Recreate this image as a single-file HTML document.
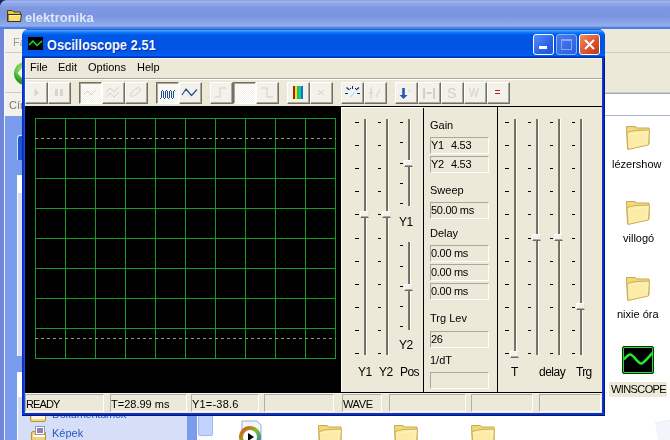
<!DOCTYPE html><html><head><meta charset="utf-8"><style>
*{box-sizing:border-box}
html,body{margin:0;padding:0}
body{width:670px;height:440px;overflow:hidden;position:relative;background:#fff;font-family:"Liberation Sans",sans-serif;font-size:11px;color:#000}
.a{position:absolute}
.t{position:absolute;white-space:nowrap;line-height:1;will-change:transform}
.btn{position:absolute;top:82px;height:22px;background:#f3f2ea;border-top:1px solid #fff;border-left:1px solid #fff;border-right:1px solid #716f64;border-bottom:1px solid #716f64;box-shadow:inset -1px -1px 0 #aca899}
.btn.dn{background:repeating-conic-gradient(#fff 0 25%,#f2f1e8 0 50%) 0 0/2px 2px;border-top:1px solid #716f64;border-left:1px solid #716f64;border-right:1px solid #fff;border-bottom:1px solid #fff;box-shadow:inset 1px 1px 0 #aca899}
.tick{position:absolute;width:4px;height:1px;background:#000}
.trk{position:absolute;width:3px;border-left:1px solid #7a776b;border-right:1px solid #fff;background:#6f6c60}
.thumb{position:absolute;width:9px;height:7px;background:#f3f2ea;border-top:1px solid #fff;border-left:1px solid #fff;border-right:1px solid #e4e1d4;border-bottom:1px solid #6f6c60;box-shadow:inset 0 -1px 0 #aca899}
.box{position:absolute;background:#ece9d8;border-top:1px solid #aca899;border-left:1px solid #aca899;border-right:1px solid #fff;border-bottom:1px solid #fff}
.sp{position:absolute;top:394px;height:18px;border-top:1px solid #b4b0a0;border-left:1px solid #b4b0a0;border-right:1px solid #fff;border-bottom:1px solid #fff}
</style></head><body>
<div class="a" style="left:0;top:0;width:670px;height:29px;background:linear-gradient(#7b90d9 0,#a2b7f0 1px,#93aaea 3px,#7e97e2 8px,#7b95e0 16px,#86a3e8 22px,#92b0ee 26px,#3f73d8 28px,#5a86dd 29px)"></div>
<svg class="a" style="left:0;top:0" width="8" height="8"><path d="M0 0H6Q1 1 0 6Z" fill="#1a2860"/></svg>
<svg class="a" style="left:6px;top:9px" width="18" height="14" viewBox="0 0 18 14"><path d="M1.5 1.5h5l1.5 1.5h6.5v9.5H1.5z" fill="#e8c840" stroke="#4a4020" stroke-width="1"/><path d="M2 5.5h13.5l-1 7H2z" fill="#f8e070" stroke="#3a3418" stroke-width="1"/><path d="M3 6.5h11" stroke="#fff2b0"/></svg>
<div class="t" style="left:25px;top:11px;font-size:13px;font-weight:bold;color:#dfe6fa">elektronika</div>
<div class="a" style="left:0;top:29px;width:4px;height:411px;background:#7084d8"></div>
<div class="a" style="left:4px;top:29px;width:1px;height:87px;background:#f8f8f4"></div>
<div class="a" style="left:5px;top:29px;width:665px;height:87px;background:#ece9d8"></div>
<div class="a" style="left:5px;top:29px;width:17px;height:87px;background:#f2f1ea"></div>
<div class="a" style="left:5px;top:52px;width:665px;height:1px;background:#d0cdc0"></div>
<div class="t" style="left:13px;top:37px;color:#999">Fá</div>
<div class="a" style="left:14px;top:62px;width:23px;height:23px;border-radius:12px;background:radial-gradient(circle at 40% 30%,#a0ea80 0,#5cc840 8px,#2a9a22 12px)"></div>
<svg class="a" style="left:14px;top:62px" width="23" height="23"><path d="M3.5 11L10 4L10 18Z" fill="#f6fbf4"/></svg>
<div class="a" style="left:5px;top:92px;width:665px;height:1px;background:#d0cdc0"></div>
<div class="t" style="left:9px;top:100px;color:#777">Cím</div>
<div class="a" style="left:605px;top:93px;width:65px;height:23px;background:#fff;border-top:1px solid #a0a8b8;border-bottom:1px solid #a5b4cf"></div>
<div class="a" style="left:4px;top:116px;width:1px;height:324px;background:#e6eeff"></div>
<div class="a" style="left:5px;top:116px;width:192px;height:324px;background:#7b9cec"></div>
<div class="a" style="left:17px;top:135px;width:170px;height:25px;background:#1f55d0;border-radius:3px 3px 0 0;border-top:1px solid #cfe0ff;border-left:1px solid #cfe0ff"></div>
<div class="a" style="left:17px;top:175px;width:170px;height:181px;background:#d6dff7;border-left:1px solid #fff"></div>
<div class="a" style="left:17px;top:175px;width:170px;height:18px;background:#fff;border-radius:4px 4px 0 0"></div>
<div class="a" style="left:17px;top:372px;width:170px;height:70px;background:#d6dff7;border-left:1px solid #fff"></div>
<div class="a" style="left:17px;top:372px;width:170px;height:25px;background:#fff;border-radius:4px 4px 0 0"></div>
<div class="a" style="left:197px;top:116px;width:16px;height:324px;background:#fbfbf8"></div>
<div class="a" style="left:198px;top:410px;width:15px;height:26px;background:#c3d3fd;border:1px solid #a3b8f0;border-radius:2px"></div>
<div class="a" style="left:213px;top:116px;width:457px;height:324px;background:#fff"></div>
<div class="t" style="left:52px;top:409px;color:#2658c0;letter-spacing:-0.25px">Dokumentumok</div>
<div class="t" style="left:52px;top:428px;color:#2658c0">Képek</div>
<div class="a" style="left:30px;top:408px;width:16px;height:14px;background:#f0d890;border:1px solid #b8962a;border-radius:2px"></div>
<div class="a" style="left:32px;top:416px;width:13px;height:3px;background:#fff8e0"></div>
<div class="a" style="left:31px;top:431px;width:15px;height:10px;background:#f0d070;border:1px solid #b8962a;border-radius:2px"></div>
<div class="a" style="left:35px;top:426px;width:10px;height:9px;background:#fff;border:1px solid #8a9ab8"></div>
<div class="a" style="left:37px;top:428px;width:6px;height:5px;background:linear-gradient(#6a8ad8,#d06a8a)"></div>
<div class="a" style="left:33px;top:435px;width:12px;height:2px;background:#fff"></div>
<svg class="a" style="left:624px;top:125px" width="28" height="26" viewBox="0 0 28 26"><path d="M2.5 1.5 L11 1.5 L13 3 L25 3 L25 19 L3.5 24 Z" fill="#f2d978" stroke="#c9aa50" stroke-width="1"/><path d="M3 7.5 Q8 6 12 5.5 L25.5 5 L24.5 20 L4 24.5 Z" fill="#fceca8" stroke="#ccae58" stroke-width="1"/><path d="M5 9 L23 7 L22.5 18" fill="none" stroke="#fdf3c0" stroke-width="1"/></svg>
<svg class="a" style="left:624px;top:200px" width="28" height="26" viewBox="0 0 28 26"><path d="M2.5 1.5 L11 1.5 L13 3 L25 3 L25 19 L3.5 24 Z" fill="#f2d978" stroke="#c9aa50" stroke-width="1"/><path d="M3 7.5 Q8 6 12 5.5 L25.5 5 L24.5 20 L4 24.5 Z" fill="#fceca8" stroke="#ccae58" stroke-width="1"/><path d="M5 9 L23 7 L22.5 18" fill="none" stroke="#fdf3c0" stroke-width="1"/></svg>
<svg class="a" style="left:624px;top:276px" width="28" height="26" viewBox="0 0 28 26"><path d="M2.5 1.5 L11 1.5 L13 3 L25 3 L25 19 L3.5 24 Z" fill="#f2d978" stroke="#c9aa50" stroke-width="1"/><path d="M3 7.5 Q8 6 12 5.5 L25.5 5 L24.5 20 L4 24.5 Z" fill="#fceca8" stroke="#ccae58" stroke-width="1"/><path d="M5 9 L23 7 L22.5 18" fill="none" stroke="#fdf3c0" stroke-width="1"/></svg>
<div class="t" style="left:612px;top:159px">lézershow</div>
<div class="t" style="left:623px;top:233px">villogó</div>
<div class="t" style="left:617px;top:309px">nixie óra</div>
<div class="a" style="left:622px;top:346px;width:32px;height:28px;background:#000;border:1px solid #0a300a;box-shadow:inset 0 0 0 1px #2ad83a, inset 0 0 0 2px #000;border-radius:2px"></div>
<svg class="a" style="left:622px;top:346px" width="32" height="28"><path d="M2 13.5C4 11 6.5 8.5 8.5 8.5C11 8.5 16 17.5 19 17.5C22 17.5 27 10 30.5 7" fill="none" stroke="#22e633" stroke-width="2.6"/></svg>
<div class="a" style="left:609px;top:382px;width:58px;height:15px;background:#ece9d8"></div>
<div class="t" style="left:611px;top:384px;letter-spacing:-0.6px">WINSCOPE</div>
<svg class="a" style="left:650px;top:418px" width="20" height="22"><path d="M5 5L20 2V22H8Z" fill="#f3f5fb"/><path d="M5 5L20 2" stroke="#eaedf7"/></svg>
<svg class="a" style="left:316px;top:424px" width="28" height="26" viewBox="0 0 28 26"><path d="M2.5 1.5 L11 1.5 L13 3 L25 3 L25 19 L3.5 24 Z" fill="#f2d978" stroke="#c9aa50" stroke-width="1"/><path d="M3 7.5 Q8 6 12 5.5 L25.5 5 L24.5 20 L4 24.5 Z" fill="#fceca8" stroke="#ccae58" stroke-width="1"/><path d="M5 9 L23 7 L22.5 18" fill="none" stroke="#fdf3c0" stroke-width="1"/></svg>
<svg class="a" style="left:392px;top:424px" width="28" height="26" viewBox="0 0 28 26"><path d="M2.5 1.5 L11 1.5 L13 3 L25 3 L25 19 L3.5 24 Z" fill="#f2d978" stroke="#c9aa50" stroke-width="1"/><path d="M3 7.5 Q8 6 12 5.5 L25.5 5 L24.5 20 L4 24.5 Z" fill="#fceca8" stroke="#ccae58" stroke-width="1"/><path d="M5 9 L23 7 L22.5 18" fill="none" stroke="#fdf3c0" stroke-width="1"/></svg>
<svg class="a" style="left:469px;top:424px" width="28" height="26" viewBox="0 0 28 26"><path d="M2.5 1.5 L11 1.5 L13 3 L25 3 L25 19 L3.5 24 Z" fill="#f2d978" stroke="#c9aa50" stroke-width="1"/><path d="M3 7.5 Q8 6 12 5.5 L25.5 5 L24.5 20 L4 24.5 Z" fill="#fceca8" stroke="#ccae58" stroke-width="1"/><path d="M5 9 L23 7 L22.5 18" fill="none" stroke="#fdf3c0" stroke-width="1"/></svg>
<svg class="a" style="left:236px;top:420px" width="32" height="20"><path d="M6 1h15l4 4v16H6z" fill="#f4f6fc" stroke="#9aabd0"/><circle cx="14" cy="17" r="9" fill="none" stroke="url(#wm)" stroke-width="4"/><defs><linearGradient id="wm" x1="0" y1="0" x2="1" y2="1"><stop offset="0" stop-color="#e8501a"/><stop offset="0.5" stop-color="#7cc02a"/><stop offset="1" stop-color="#2a6fd8"/></linearGradient></defs><circle cx="14" cy="17" r="6.5" fill="#fff"/><path d="M12 13l6 4-6 4z" fill="#000"/></svg>
<div class="a" style="left:22px;top:29px;width:583px;height:387px;background:#0831d9;border-radius:7px 7px 0 0"></div>
<div class="a" style="left:22px;top:29px;width:583px;height:29px;border-radius:7px 7px 0 0;background:linear-gradient(#2a62d8 0px 1px,#4a9cff 1px 2px,#2a8aff 2px 3px,#1479fc 3px 4px,#066cf6 4px 5px,#0262ee 5px 6px,#0057e5 6px 7px,#0057e5 7px 8px,#0057e5 8px 9px,#0057e5 9px 10px,#0057e5 10px 11px,#0054e3 11px 12px,#0054e3 12px 13px,#0054e3 13px 14px,#0054e3 14px 15px,#0054e3 15px 16px,#0054e3 16px 17px,#0054e3 17px 18px,#0054e3 18px 19px,#0054e3 19px 20px,#0054e3 20px 21px,#0058ea 21px 22px,#0058ea 22px 23px,#0058ea 23px 24px,#0058ea 24px 25px,#005ef2 25px 26px,#005ef2 26px 27px,#0040c8 27px 28px,#0032b4 28px 29px)"></div>
<div class="a" style="left:22px;top:58px;width:3px;height:358px;background:linear-gradient(90deg,#0a2eb8 0 1px,#0a38d8 1px 2px,#1a50e8 2px 3px)"></div>
<div class="a" style="left:602px;top:58px;width:3px;height:358px;background:linear-gradient(90deg,#1238d0 0 1px,#0a2cb8 1px 2px,#00188c 2px 3px)"></div>
<div class="a" style="left:22px;top:413px;width:583px;height:3px;background:linear-gradient(#1238d0 0 1px,#0a2cb8 1px 2px,#00168a 2px 3px)"></div>
<div class="a" style="left:28px;top:37px;width:15px;height:13px;background:#000"></div>
<svg class="a" style="left:28px;top:37px" width="15" height="13"><polyline points="1,8 5,4 9,8.5 14,4" fill="none" stroke="#20e020" stroke-width="1.5"/></svg>
<div class="t" style="left:47px;top:38px;font-size:14px;font-weight:bold;color:#fff;text-shadow:1px 1px 0 #0a2ea0;transform:scaleX(0.92);transform-origin:0 0">Oscilloscope 2.51</div>
<div class="a" style="left:533px;top:34px;width:21px;height:21px;border:1px solid #fff;border-radius:3px;background:linear-gradient(135deg,#5a8cff,#2b62e8 60%,#1f50d8)"></div>
<div class="a" style="left:539px;top:46px;width:8px;height:3px;background:#fff"></div>
<div class="a" style="left:556px;top:34px;width:21px;height:21px;border:1px solid #8fb0f5;border-radius:3px;background:linear-gradient(135deg,#4a7cf0,#2a5ee0)"></div>
<div class="a" style="left:561px;top:39px;width:11px;height:11px;border:1px solid #8aa6ec;border-top-width:2px"></div>
<div class="a" style="left:579px;top:34px;width:21px;height:21px;border:1px solid #fff;border-radius:3px;background:linear-gradient(135deg,#f08a60,#d9502a 60%,#c03a18)"></div>
<svg class="a" style="left:579px;top:34px" width="21" height="21"><path d="M6 6L15 15M15 6L6 15" stroke="#fff" stroke-width="2"/></svg>
<div class="a" style="left:25px;top:58px;width:577px;height:355px;background:#ece9d8;border-top:1px solid #f8f8f4"></div>
<div class="a" style="left:25px;top:58px;width:1px;height:355px;background:#fbfbf7"></div>
<div class="t" style="left:30px;top:62px">File</div>
<div class="t" style="left:58px;top:62px">Edit</div>
<div class="t" style="left:88px;top:62px">Options</div>
<div class="t" style="left:137px;top:62px">Help</div>
<div class="a" style="left:25px;top:78px;width:577px;height:1px;background:#aca899"></div>
<div class="a" style="left:25px;top:79px;width:577px;height:1px;background:#fff"></div>
<div class="btn" style="left:25px;width:23px"></div>
<div class="btn" style="left:48px;width:23px"></div>
<div class="btn dn" style="left:79px;width:23px"></div>
<div class="btn" style="left:102px;width:23px"></div>
<div class="btn" style="left:125px;width:23px"></div>
<div class="btn dn" style="left:156px;width:23px"></div>
<div class="btn" style="left:179px;width:23px"></div>
<div class="btn" style="left:210px;width:23px"></div>
<div class="btn dn" style="left:233px;width:23px"></div>
<div class="btn" style="left:256px;width:23px"></div>
<div class="btn" style="left:287px;width:23px"></div>
<div class="btn" style="left:310px;width:23px"></div>
<div class="btn" style="left:341px;width:23px"></div>
<div class="btn" style="left:364px;width:23px"></div>
<div class="btn" style="left:395px;width:23px"></div>
<div class="btn" style="left:418px;width:23px"></div>
<div class="btn" style="left:441px;width:23px"></div>
<div class="btn" style="left:464px;width:23px"></div>
<div class="btn" style="left:487px;width:23px"></div>
<svg class="a" style="left:26px;top:81px" width="22" height="23"><path d="M8.5 7.5L13 11.5L8.5 15.5Z" fill="#d8d5c8"/></svg>
<svg class="a" style="left:48px;top:81px" width="22" height="23"><path d="M7 8h3v7H7zM12 8h3v7h-3z" fill="#d8d5c8"/></svg>
<svg class="a" style="left:79px;top:81px" width="22" height="23"><polyline points="5,13 9,10 12,14 17,9" fill="none" stroke="#d3d0c3" stroke-width="1"/></svg>
<svg class="a" style="left:102px;top:81px" width="22" height="23"><polyline points="4,11 8,7 12,11 17,6" fill="none" stroke="#d3d0c3"/><polyline points="4,16 8,12 12,16 17,11" fill="none" stroke="#d3d0c3"/></svg>
<svg class="a" style="left:125px;top:81px" width="22" height="23"><path d="M6 15C4 13 12 5 15 7C17 9 9 17 6 15Z" fill="none" stroke="#d3d0c3"/></svg>
<svg class="a" style="left:156px;top:81px" width="22" height="23"><g fill="#1f4a98"><rect x="5" y="10" width="1" height="7"/><rect x="7" y="10" width="1" height="7"/><rect x="9" y="10" width="1" height="7"/><rect x="11" y="10" width="1" height="7"/><rect x="13" y="10" width="1" height="7"/><rect x="15" y="10" width="1" height="7"/><rect x="17" y="10" width="1" height="7"/><rect x="6" y="9" width="1" height="1"/><rect x="10" y="9" width="1" height="1"/><rect x="14" y="9" width="1" height="1"/><rect x="18" y="9" width="1" height="1"/><rect x="4" y="17" width="1" height="1"/><rect x="8" y="17" width="1" height="1"/><rect x="12" y="17" width="1" height="1"/><rect x="16" y="17" width="1" height="1"/></g></svg>
<svg class="a" style="left:179px;top:81px" width="22" height="23"><polyline points="3,14 7,8 12.5,14.5 18,8.5" fill="none" stroke="#2a4ea0" stroke-width="1.2" stroke-linejoin="round"/></svg>
<svg class="a" style="left:210px;top:81px" width="22" height="23"><path d="M5 16h5V7h6" fill="none" stroke="#d3d0c3"/></svg>
<svg class="a" style="left:256px;top:81px" width="22" height="23"><path d="M5 7h6v9h6" fill="none" stroke="#d3d0c3"/></svg>
<svg class="a" style="left:287px;top:81px" width="22" height="23"><rect x="6" y="5" width="2" height="13" fill="#b02000"/><rect x="8" y="5" width="2" height="13" fill="#f0e030"/><rect x="10" y="5" width="2" height="13" fill="#20c840"/><rect x="12" y="5" width="2" height="13" fill="#10c8a8"/><rect x="14" y="5" width="2" height="13" fill="#1870c0"/></svg>
<svg class="a" style="left:310px;top:81px" width="22" height="23"><path d="M8 9l6 5M14 9l-6 5" stroke="#d3d0c3"/></svg>
<svg class="a" style="left:342px;top:81px" width="22" height="23"><ellipse cx="11" cy="11" rx="6" ry="4" fill="#ebf5fb"/><path d="M3 12.5h3M15 12.5h3M4.5 6.5l3 2.5M17 6.5l-3 2.5M10.5 5v3M8 7.5h1M13 7.5h1" stroke="#1c2c55" stroke-width="1.1"/><path d="M8.5 16l4-4.5" stroke="#b9c8d8"/></svg>
<svg class="a" style="left:364px;top:81px" width="22" height="23"><path d="M7 6v12M5 12h4M12 16l4-8" stroke="#d3d0c3"/></svg>
<svg class="a" style="left:395px;top:81px" width="22" height="23"><path d="M7.2 7h2.6v7h2.7l-4 4-4-4h2.7z" fill="#2a54b8"/><path d="M13 10h3" stroke="#d8d5c8"/></svg>
<svg class="a" style="left:418px;top:81px" width="22" height="23"><path d="M6 7v11M16 7v11M8.5 12h5" stroke="#d3d0c3" stroke-width="2"/></svg>
<div class="t" style="left:447px;top:86px;font-size:14px;color:#d3d0c3">S</div>
<div class="t" style="left:469px;top:86px;font-size:13px;color:#d3d0c3;transform:scaleX(0.8);transform-origin:0 0">W</div>
<svg class="a" style="left:487px;top:81px" width="22" height="23"><rect x="8" y="9" width="5" height="1" fill="#c01828"/><rect x="8" y="12" width="5" height="1" fill="#c01828"/></svg>
<div class="a" style="left:25px;top:106px;width:316px;height:287px;background:#000"></div>
<svg class="a" style="left:0;top:0" width="670" height="440"><rect x="35" y="118" width="1" height="241" fill="#189a2a"/><rect x="65" y="118" width="1" height="241" fill="#189a2a"/><rect x="95" y="118" width="1" height="241" fill="#189a2a"/><rect x="125" y="118" width="1" height="241" fill="#189a2a"/><rect x="155" y="118" width="1" height="241" fill="#189a2a"/><rect x="185" y="118" width="1" height="241" fill="#189a2a"/><rect x="215" y="118" width="1" height="241" fill="#189a2a"/><rect x="245" y="118" width="1" height="241" fill="#189a2a"/><rect x="275" y="118" width="1" height="241" fill="#189a2a"/><rect x="305" y="118" width="1" height="241" fill="#189a2a"/><rect x="335" y="118" width="1" height="241" fill="#189a2a"/><rect x="35" y="118" width="301" height="1" fill="#189a2a"/><rect x="35" y="148" width="301" height="1" fill="#189a2a"/><rect x="35" y="178" width="301" height="1" fill="#189a2a"/><rect x="35" y="208" width="301" height="1" fill="#189a2a"/><rect x="35" y="238" width="301" height="1" fill="#189a2a"/><rect x="35" y="268" width="301" height="1" fill="#189a2a"/><rect x="35" y="298" width="301" height="1" fill="#189a2a"/><rect x="35" y="328" width="301" height="1" fill="#189a2a"/><rect x="35" y="358" width="301" height="1" fill="#189a2a"/><line x1="35" y1="138.5" x2="336" y2="138.5" stroke="#84a47a" stroke-dasharray="3 3"/><line x1="35" y1="338.5" x2="336" y2="338.5" stroke="#84a47a" stroke-dasharray="3 3"/></svg>
<div class="a" style="left:341px;top:106px;width:261px;height:1px;background:#000"></div>
<div class="a" style="left:341px;top:392px;width:261px;height:1px;background:#000"></div>
<div class="a" style="left:423px;top:106px;width:1px;height:287px;background:#000"></div>
<div class="a" style="left:497px;top:106px;width:1px;height:287px;background:#000"></div>
<div class="a" style="left:341px;top:107px;width:83px;height:1px;background:#fff"></div>
<div class="a" style="left:341px;top:107px;width:1px;height:285px;background:#fff"></div>
<div class="trk" style="left:364px;top:119px;height:236px"></div>
<div class="tick" style="left:355px;top:122px;width:4px"></div>
<div class="tick" style="left:355px;top:145px;width:4px"></div>
<div class="tick" style="left:355px;top:168px;width:4px"></div>
<div class="tick" style="left:355px;top:191px;width:4px"></div>
<div class="tick" style="left:355px;top:214px;width:4px"></div>
<div class="tick" style="left:355px;top:238px;width:4px"></div>
<div class="tick" style="left:355px;top:261px;width:4px"></div>
<div class="tick" style="left:355px;top:284px;width:4px"></div>
<div class="tick" style="left:355px;top:307px;width:4px"></div>
<div class="tick" style="left:355px;top:330px;width:4px"></div>
<div class="tick" style="left:355px;top:353px;width:4px"></div>
<div class="thumb" style="left:360px;top:211px"></div>
<div class="trk" style="left:386px;top:119px;height:236px"></div>
<div class="tick" style="left:378px;top:122px;width:3px"></div>
<div class="tick" style="left:378px;top:145px;width:3px"></div>
<div class="tick" style="left:378px;top:168px;width:3px"></div>
<div class="tick" style="left:378px;top:191px;width:3px"></div>
<div class="tick" style="left:378px;top:214px;width:3px"></div>
<div class="tick" style="left:378px;top:238px;width:3px"></div>
<div class="tick" style="left:378px;top:261px;width:3px"></div>
<div class="tick" style="left:378px;top:284px;width:3px"></div>
<div class="tick" style="left:378px;top:307px;width:3px"></div>
<div class="tick" style="left:378px;top:330px;width:3px"></div>
<div class="tick" style="left:378px;top:353px;width:3px"></div>
<div class="thumb" style="left:382px;top:211px"></div>
<div class="trk" style="left:408px;top:119px;height:87px"></div>
<div class="tick" style="left:400px;top:122px;width:3px"></div>
<div class="tick" style="left:400px;top:142px;width:3px"></div>
<div class="tick" style="left:400px;top:163px;width:3px"></div>
<div class="tick" style="left:400px;top:183px;width:3px"></div>
<div class="tick" style="left:400px;top:203px;width:3px"></div>
<div class="thumb" style="left:404px;top:160px"></div>
<div class="trk" style="left:408px;top:242px;height:88px"></div>
<div class="tick" style="left:400px;top:245px;width:3px"></div>
<div class="tick" style="left:400px;top:266px;width:3px"></div>
<div class="tick" style="left:400px;top:286px;width:3px"></div>
<div class="tick" style="left:400px;top:306px;width:3px"></div>
<div class="tick" style="left:400px;top:326px;width:3px"></div>
<div class="thumb" style="left:404px;top:284px"></div>
<div class="t" style="left:399px;top:216px;font-size:12px;letter-spacing:-0.5px">Y1</div>
<div class="t" style="left:399px;top:339px;font-size:12px;letter-spacing:-0.5px">Y2</div>
<div class="t" style="left:358px;top:366px;font-size:12px;letter-spacing:-0.5px">Y1</div>
<div class="t" style="left:379px;top:366px;font-size:12px;letter-spacing:-0.5px">Y2</div>
<div class="t" style="left:400px;top:366px;font-size:12px;letter-spacing:-0.6px">Pos</div>
<div class="trk" style="left:514px;top:119px;height:236px"></div>
<div class="tick" style="left:505px;top:122px;width:4px"></div>
<div class="tick" style="left:505px;top:145px;width:4px"></div>
<div class="tick" style="left:505px;top:168px;width:4px"></div>
<div class="tick" style="left:505px;top:191px;width:4px"></div>
<div class="tick" style="left:505px;top:214px;width:4px"></div>
<div class="tick" style="left:505px;top:238px;width:4px"></div>
<div class="tick" style="left:505px;top:261px;width:4px"></div>
<div class="tick" style="left:505px;top:284px;width:4px"></div>
<div class="tick" style="left:505px;top:307px;width:4px"></div>
<div class="tick" style="left:505px;top:330px;width:4px"></div>
<div class="tick" style="left:505px;top:353px;width:4px"></div>
<div class="thumb" style="left:510px;top:351px"></div>
<div class="trk" style="left:536px;top:119px;height:236px"></div>
<div class="tick" style="left:528px;top:122px;width:3px"></div>
<div class="tick" style="left:528px;top:145px;width:3px"></div>
<div class="tick" style="left:528px;top:168px;width:3px"></div>
<div class="tick" style="left:528px;top:191px;width:3px"></div>
<div class="tick" style="left:528px;top:214px;width:3px"></div>
<div class="tick" style="left:528px;top:238px;width:3px"></div>
<div class="tick" style="left:528px;top:261px;width:3px"></div>
<div class="tick" style="left:528px;top:284px;width:3px"></div>
<div class="tick" style="left:528px;top:307px;width:3px"></div>
<div class="tick" style="left:528px;top:330px;width:3px"></div>
<div class="tick" style="left:528px;top:353px;width:3px"></div>
<div class="thumb" style="left:532px;top:234px"></div>
<div class="trk" style="left:558px;top:119px;height:236px"></div>
<div class="tick" style="left:550px;top:122px;width:3px"></div>
<div class="tick" style="left:550px;top:145px;width:3px"></div>
<div class="tick" style="left:550px;top:168px;width:3px"></div>
<div class="tick" style="left:550px;top:191px;width:3px"></div>
<div class="tick" style="left:550px;top:214px;width:3px"></div>
<div class="tick" style="left:550px;top:238px;width:3px"></div>
<div class="tick" style="left:550px;top:261px;width:3px"></div>
<div class="tick" style="left:550px;top:284px;width:3px"></div>
<div class="tick" style="left:550px;top:307px;width:3px"></div>
<div class="tick" style="left:550px;top:330px;width:3px"></div>
<div class="tick" style="left:550px;top:353px;width:3px"></div>
<div class="thumb" style="left:554px;top:234px"></div>
<div class="trk" style="left:580px;top:119px;height:236px"></div>
<div class="tick" style="left:572px;top:122px;width:3px"></div>
<div class="tick" style="left:572px;top:145px;width:3px"></div>
<div class="tick" style="left:572px;top:168px;width:3px"></div>
<div class="tick" style="left:572px;top:191px;width:3px"></div>
<div class="tick" style="left:572px;top:214px;width:3px"></div>
<div class="tick" style="left:572px;top:238px;width:3px"></div>
<div class="tick" style="left:572px;top:261px;width:3px"></div>
<div class="tick" style="left:572px;top:284px;width:3px"></div>
<div class="tick" style="left:572px;top:307px;width:3px"></div>
<div class="tick" style="left:572px;top:330px;width:3px"></div>
<div class="tick" style="left:572px;top:353px;width:3px"></div>
<div class="thumb" style="left:576px;top:303px"></div>
<div class="t" style="left:511px;top:366px;font-size:12px">T</div>
<div class="t" style="left:539px;top:366px;font-size:12px;letter-spacing:-0.5px">delay</div>
<div class="t" style="left:576px;top:366px;font-size:12px;letter-spacing:-0.7px">Trg</div>
<div class="t" style="left:430px;top:120px;font-size:11px">Gain</div>
<div class="box" style="left:430px;top:137px;width:59px;height:17px"></div>
<div class="t" style="left:431px;top:140px;font-size:11px;letter-spacing:-0.3px">Y1</div>
<div class="box" style="left:430px;top:156px;width:59px;height:17px"></div>
<div class="t" style="left:431px;top:159px;font-size:11px;letter-spacing:-0.3px">Y2</div>
<div class="t" style="left:451px;top:140px;font-size:11px;letter-spacing:-0.3px">4.53</div>
<div class="t" style="left:451px;top:159px;font-size:11px;letter-spacing:-0.3px">4.53</div>
<div class="t" style="left:430px;top:185px;font-size:11px">Sweep</div>
<div class="box" style="left:430px;top:202px;width:59px;height:17px"></div>
<div class="t" style="left:431px;top:205px;font-size:11px;letter-spacing:-0.3px">50.00 ms</div>
<div class="t" style="left:430px;top:228px;font-size:11px">Delay</div>
<div class="box" style="left:430px;top:245px;width:59px;height:17px"></div>
<div class="t" style="left:431px;top:248px;font-size:11px;letter-spacing:-0.3px">0.00 ms</div>
<div class="box" style="left:430px;top:264px;width:59px;height:17px"></div>
<div class="t" style="left:431px;top:267px;font-size:11px;letter-spacing:-0.3px">0.00 ms</div>
<div class="box" style="left:430px;top:283px;width:59px;height:17px"></div>
<div class="t" style="left:431px;top:286px;font-size:11px;letter-spacing:-0.3px">0.00 ms</div>
<div class="t" style="left:430px;top:313px;font-size:11px">Trg Lev</div>
<div class="box" style="left:430px;top:331px;width:59px;height:17px"></div>
<div class="t" style="left:431px;top:334px;font-size:11px;letter-spacing:-0.3px">26</div>
<div class="t" style="left:430px;top:355px;font-size:11px">1/dT</div>
<div class="box" style="left:430px;top:372px;width:59px;height:17px"></div>
<div class="a" style="left:25px;top:393px;width:577px;height:1px;background:#f6f5ee"></div>
<div class="sp" style="left:25px;width:79px"></div>
<div class="t" style="left:26px;top:399px;font-size:11px;letter-spacing:-0.9px">READY</div>
<div class="sp" style="left:110px;width:77px"></div>
<div class="t" style="left:111px;top:399px;font-size:11px;letter-spacing:0px">T=28.99 ms</div>
<div class="sp" style="left:191px;width:68px"></div>
<div class="t" style="left:192px;top:399px;font-size:11px;letter-spacing:0.2px">Y1=-38.6</div>
<div class="sp" style="left:264px;width:70px"></div>
<div class="sp" style="left:342px;width:40px"></div>
<div class="t" style="left:343px;top:399px;font-size:11px;letter-spacing:-0.4px">WAVE</div>
<div class="sp" style="left:389px;width:77px"></div>
<div class="sp" style="left:471px;width:62px"></div>
<div class="sp" style="left:539px;width:62px"></div>
</body></html>
